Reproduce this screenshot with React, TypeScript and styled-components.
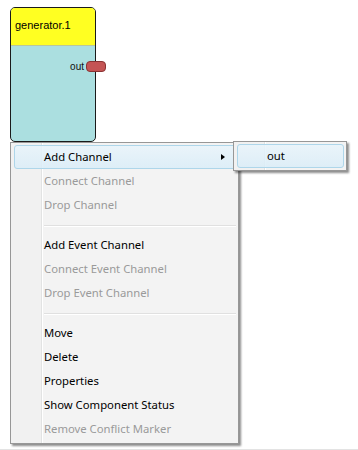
import styled, { createGlobalStyle } from "styled-components";

const GlobalStyle = createGlobalStyle`
  html, body {
    margin: 0;
    padding: 0;
    background: #ffffff;
  }
  body {
    font-family: "Noto Sans", "Open Sans", sans-serif;
  }
`;

const Canvas = styled.div`
  position: relative;
  width: 358px;
  height: 449px;
  border-bottom: 1px solid #e3e3e3;
  overflow: hidden;
`;

const Node = styled.div`
  position: absolute;
  left: ${p => p.x}px;
  top: ${p => p.y}px;
  width: 84px;
  height: 133px;
  border: 1px solid #1a1a1a;
  border-radius: 5px;
  background: #abdfe0;
  display: flex;
  flex-direction: column;
`;

const NodeHeader = styled.div`
  height: 38px;
  background: #ffff22;
  border-bottom: 1px solid #b9c79a;
  border-radius: 4px 4px 0 0;
  display: flex;
  align-items: center;
  padding-left: 4px;
  padding-bottom: 3px;
  box-sizing: border-box;
  font-family: "Liberation Sans", Arial, sans-serif;
  font-size: 11px;
  color: #000;
`;

const PortRow = styled.div`
  display: flex;
  justify-content: flex-end;
  align-items: center;
  gap: 2px;
  margin-top: 15px;
  margin-right: -11px;
  font-family: "Liberation Sans", Arial, sans-serif;
  font-size: 10px;
  color: #111;
`;

const Port = styled.div`
  width: 18px;
  height: 9px;
  background: #c45454;
  border: 1px solid #8a3333;
  border-radius: 4px;
`;

const Menu = styled.div`
  position: absolute;
  left: ${p => p.x}px;
  top: ${p => p.y}px;
  width: ${p => p.w}px;
  box-sizing: border-box;
  border: 1px solid #979797;
  padding: 2px 2px 2px 3px;
  background: linear-gradient(
    to right,
    #f1f1f1 30px,
    #e2e3e3 30px,
    #e2e3e3 31px,
    #ffffff 31px,
    #ffffff 32px,
    #f3f3f3 32px
  );
  box-shadow: 2px 2px 2px rgba(0, 0, 0, 0.45);
  display: flex;
  flex-direction: column;
  font-size: 11.3px;
`;

const Item = styled.div`
  position: relative;
  height: 24px;
  box-sizing: border-box;
  display: flex;
  align-items: center;
  padding-left: 29px;
  padding-bottom: 1px;
  color: ${p => (p.disabled ? "#9a9a9a" : "#000")};
  border: 1px solid ${p => (p.active ? "#aed6ea" : "transparent")};
  border-radius: 3px;
  background: ${p =>
    p.active
      ? "linear-gradient(to bottom, rgba(232,244,251,0.85), rgba(218,237,248,0.85))"
      : "transparent"};
`;

const Arrow = styled.span`
  position: absolute;
  right: 10px;
  top: 8px;
  width: 0;
  height: 0;
  border-top: 3.5px solid transparent;
  border-bottom: 3.5px solid transparent;
  border-left: 4px solid #000;
`;

const Separator = styled.div`
  height: 16px;
  display: flex;
  align-items: center;
  padding-left: 30px;
  &::after {
    content: "";
    flex: 1;
    height: 1px;
    background: #e0e0e0;
    box-shadow: 0 1px 0 #ffffff;
  }
`;

const groups = [
  [
    { label: "Add Channel", active: true, sub: true },
    { label: "Connect Channel", disabled: true },
    { label: "Drop Channel", disabled: true },
  ],
  [
    { label: "Add Event Channel" },
    { label: "Connect Event Channel", disabled: true },
    { label: "Drop Event Channel", disabled: true },
  ],
  [
    { label: "Move" },
    { label: "Delete" },
    { label: "Properties" },
    { label: "Show Component Status" },
    { label: "Remove Conflict Marker", disabled: true },
  ],
];

export default function App() {
  return (
    <>
      <GlobalStyle />
      <Canvas>
        <Node x={10} y={7}>
          <NodeHeader>generator.1</NodeHeader>
          <PortRow>
            <span>out</span>
            <Port />
          </PortRow>
        </Node>

        <Menu x={10} y={142} w={229}>
          {groups.map((g, gi) => (
            <div key={gi}>
              {gi > 0 && <Separator />}
              {g.map(it => (
                <Item key={it.label} active={it.active} disabled={it.disabled}>
                  {it.label}
                  {it.sub && <Arrow />}
                </Item>
              ))}
            </div>
          ))}
        </Menu>

        <Menu x={233} y={141} w={114}>
          <Item active>out</Item>
        </Menu>
      </Canvas>
    </>
  );
}
